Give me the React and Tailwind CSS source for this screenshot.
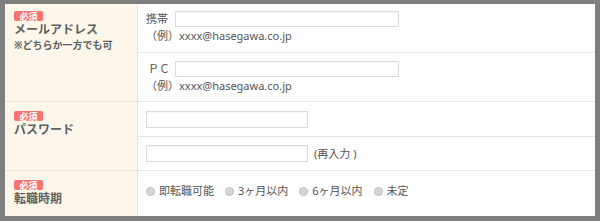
const font = { fontFamily: '"Noto Sans", "Noto Sans CJK JP", sans-serif' };

function Badge() {
  return (
    <div className="flex items-center justify-center h-[10px] w-[29px] rounded-[2px] bg-[#fa7373] text-white text-[9px] font-bold leading-none">
      必須
    </div>
  );
}

function Field({ w }) {
  return <div className={`${w} bg-white border border-[#dcdcdc] shadow-[inset_0_1px_1px_rgba(0,0,0,0.04)]`} />;
}

function Radio({ label }) {
  return (
    <label className="flex items-center gap-[4px]">
      <span className="w-[9px] h-[9px] rounded-full bg-[#d6d6d6] border border-[#bdbdbd]" />
      <span>{label}</span>
    </label>
  );
}

export default function App() {
  return (
    <div className="w-[600px] h-[221px] bg-[#7f7f7f] pt-[4px] px-[5px]" style={font}>
      <div className="bg-white text-[#555] h-[212px]">
        {/* メールアドレス */}
        <div className="flex h-[98px] border-b border-[#e6e6e6]">
          <div className="w-[133px] shrink-0 bg-[#fdf6ea] border-r border-[#e6e6e6] pl-[9px] pt-[7px] text-[#606060]">
            <Badge />
            <div className="text-[12px] font-bold leading-[15px] mt-[1px]">メールアドレス</div>
            <div className="text-[10px] font-bold leading-[14px] mt-[1px]">※どちらか一方でも可</div>
          </div>
          <div className="flex-1 flex flex-col text-[11px]">
            <div className="h-[49px] border-b border-[#e6e6e6] pl-[8px] pt-[7px]">
              <div className="flex items-center h-[16px]">
                <span className="w-[29px]">携帯</span>
                <Field w="w-[224px] h-[16px]" />
              </div>
              <div className="leading-[16px] mt-[1px]">（例）xxxx@hasegawa.co.jp</div>
            </div>
            <div className="h-[48px] pl-[8px] pt-[8px]">
              <div className="flex items-center h-[16px]">
                <span className="w-[29px] pl-[2px]">ＰＣ</span>
                <Field w="w-[224px] h-[16px]" />
              </div>
              <div className="leading-[16px] mt-[1px]">（例）xxxx@hasegawa.co.jp</div>
            </div>
          </div>
        </div>

        {/* パスワード */}
        <div className="flex h-[69px] border-b border-[#e6e6e6]">
          <div className="w-[133px] shrink-0 bg-[#fdf6ea] border-r border-[#e6e6e6] pl-[9px] pt-[9px] text-[#606060]">
            <Badge />
            <div className="text-[12px] font-bold leading-[15px] mt-[1px]">パスワード</div>
          </div>
          <div className="flex-1 flex flex-col text-[11px]">
            <div className="h-[35px] border-b border-[#e6e6e6] pl-[8px] pt-[9px]">
              <Field w="w-[162px] h-[17px]" />
            </div>
            <div className="h-[33px] pl-[8px] pt-[8px] flex items-start gap-[6px]">
              <Field w="w-[162px] h-[17px]" />
              <span className="leading-[17px]">(再入力 )</span>
            </div>
          </div>
        </div>

        {/* 転職時期 */}
        <div className="flex h-[45px]">
          <div className="w-[133px] shrink-0 bg-[#fdf6ea] border-r border-[#e6e6e6] pl-[9px] pt-[9px] text-[#606060]">
            <Badge />
            <div className="text-[12px] font-bold leading-[15px] mt-[1px]">転職時期</div>
          </div>
          <div className="flex-1 pl-[8px] pt-[12px] text-[11px] leading-[16px] flex items-start gap-[11px]">
            <Radio label="即転職可能" />
            <Radio label="3ヶ月以内" />
            <Radio label="6ヶ月以内" />
            <Radio label="未定" />
          </div>
        </div>
      </div>
    </div>
  );
}
